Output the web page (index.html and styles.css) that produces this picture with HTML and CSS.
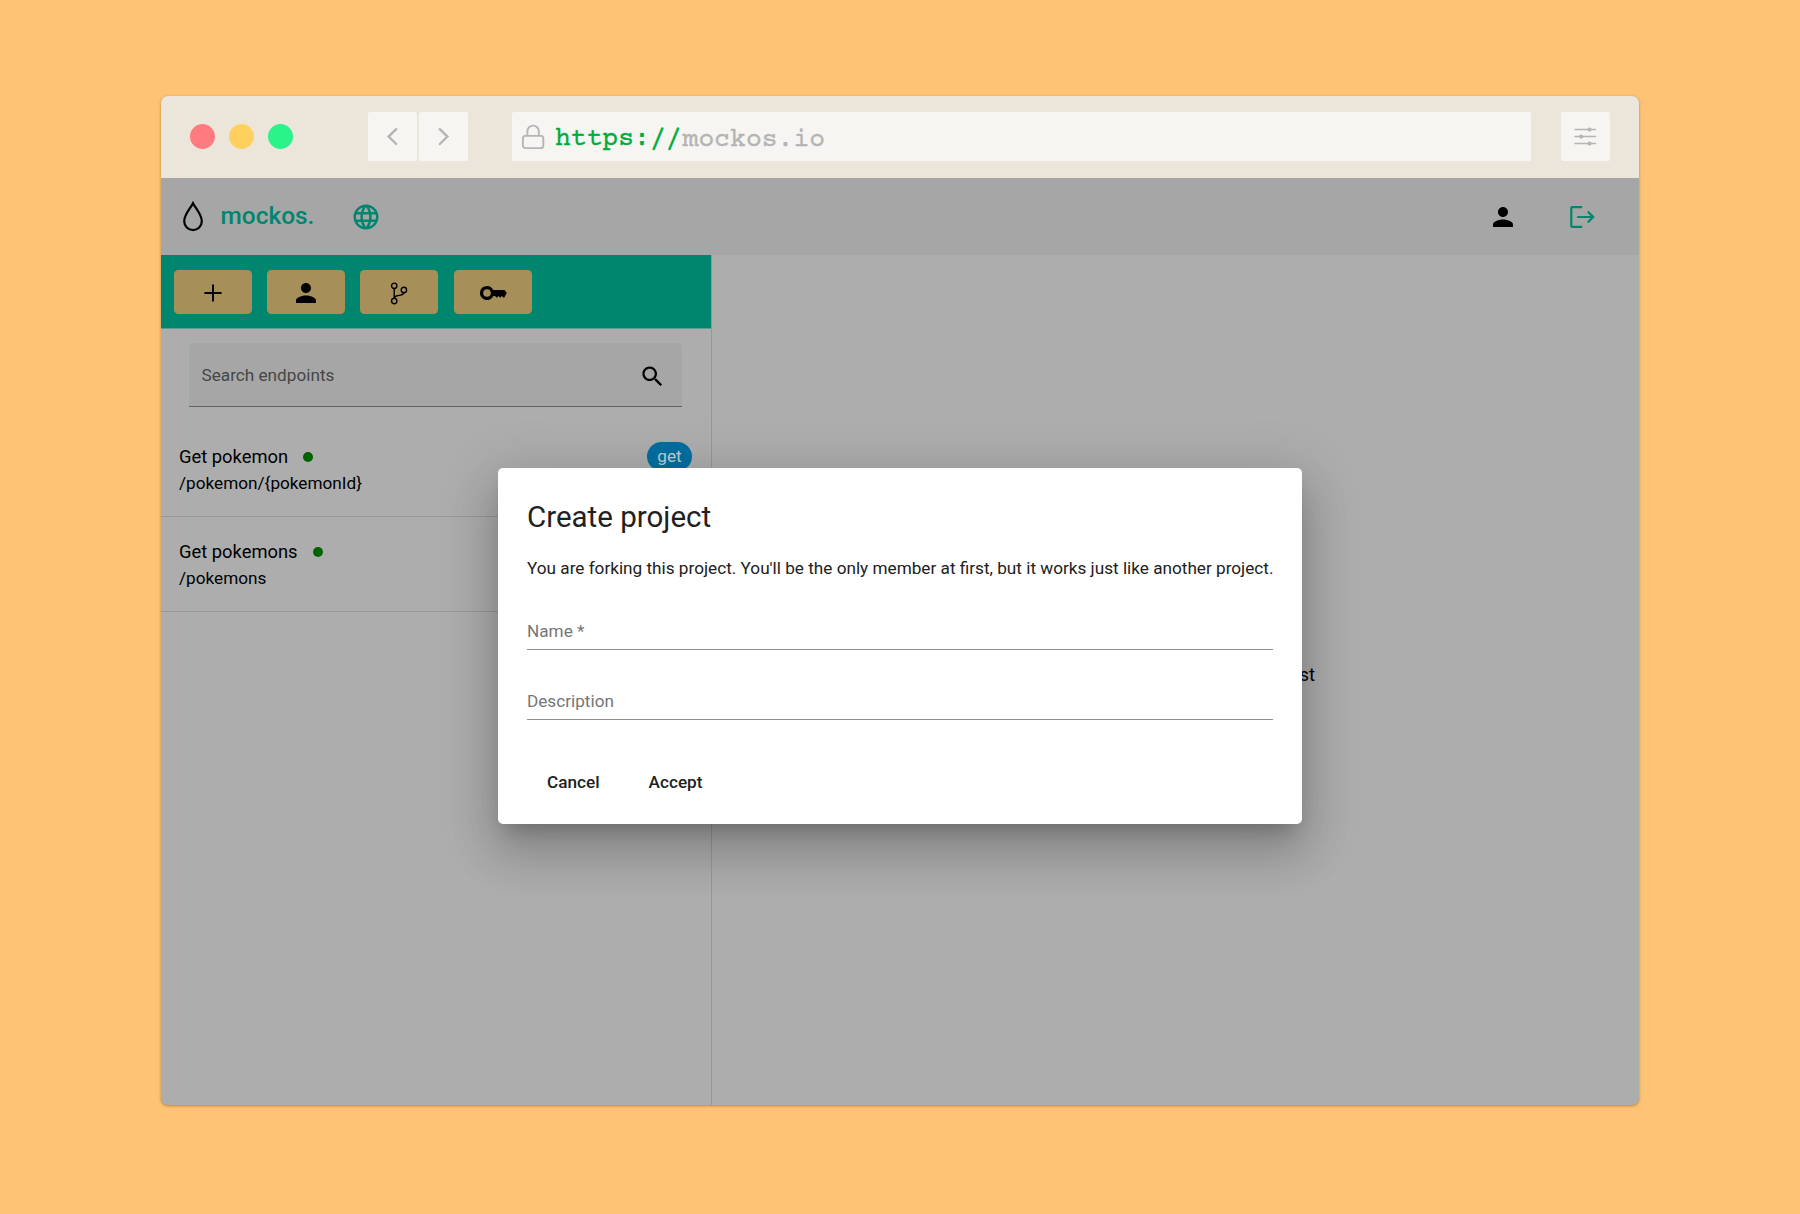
FILE: index.html
```html
<!DOCTYPE html>
<html lang="en">
<head>
<meta charset="utf-8">
<title>mockos.</title>
<link rel="stylesheet" href="styles.css">
</head>
<body>
<div class="window">
  <div class="chrome">
    <div class="lights"><i class="light red"></i><i class="light yellow"></i><i class="light green"></i></div>
    <div class="nav">
      <span class="tile"><svg width="49" height="49" viewBox="0 0 49 49"><path class="arrow" d="M28.2 17.2 20.6 24.6 28.2 32"/></svg></span>
      <span class="tile"><svg width="49" height="49" viewBox="0 0 49 49"><path class="arrow" d="M20.8 17.2 28.4 24.6 20.8 32"/></svg></span>
    </div>
    <div class="address">
      <svg class="lock" width="24" height="26" viewBox="0 0 24 26"><rect x="1.9" y="11.9" width="20.4" height="12.2" rx="2.4"/><path d="M6.4 11.5V7.3a5.7 5.7 0 0 1 11.4 0v4.2"/></svg>
      <span class="scheme">https://</span><span class="host">mockos.io</span>
    </div>
    <span class="tile settings"><svg width="49" height="49" viewBox="0 0 49 49"><g stroke="#b5b5b5" stroke-width="1.5" stroke-linecap="round"><path d="M14 17.6H34.5M14 24.6H34.5M14 31.6H34.5"/></g><g fill="#b5b5b5"><circle cx="28.5" cy="17.6" r="2.1"/><circle cx="20.2" cy="24.6" r="2.1"/><circle cx="28.5" cy="31.6" r="2.1"/></g></svg></span>
  </div>

  <div class="app">
    <header class="topbar">
      <svg class="drop" width="20" height="31" viewBox="0 0 20 31"><path d="M10 2.2C7.6 7.3 1.2 13.4 1.2 20.2a8.8 8.9 0 0 0 17.6 0C18.8 13.4 12.4 7.3 10 2.2z"/></svg>
      <span class="brand">mockos.</span>
      <svg class="globe" width="30" height="30" viewBox="0 0 24 24"><path d="M11.99 2C6.47 2 2 6.48 2 12s4.47 10 9.99 10C17.52 22 22 17.52 22 12S17.52 2 11.99 2zm6.93 6h-2.95c-.32-1.25-.78-2.45-1.38-3.56 1.84.63 3.37 1.91 4.33 3.56zM12 4.04c.83 1.2 1.48 2.53 1.91 3.96h-3.82c.43-1.43 1.08-2.76 1.91-3.96zM4.26 14C4.1 13.36 4 12.69 4 12s.1-1.36.26-2h3.38c-.08.66-.14 1.32-.14 2s.06 1.34.14 2H4.26zm.82 2h2.95c.32 1.25.78 2.45 1.38 3.56-1.84-.63-3.37-1.9-4.33-3.56zm2.95-8H5.08c.96-1.66 2.49-2.93 4.33-3.56C8.81 5.55 8.35 6.75 8.03 8zM12 19.96c-.83-1.2-1.48-2.53-1.91-3.96h3.82c-.43 1.43-1.08 2.76-1.91 3.96zM14.34 14H9.66c-.09-.66-.16-1.32-.16-2s.07-1.35.16-2h4.68c.09.65.16 1.32.16 2s-.07 1.34-.16 2zm.25 5.56c.6-1.11 1.06-2.31 1.38-3.56h2.95c-.96 1.65-2.49 2.93-4.33 3.56zM16.36 14c.08-.66.14-1.32.14-2s-.06-1.34-.14-2h3.38c.16.64.26 1.31.26 2s-.1 1.36-.26 2h-3.38z"/></svg>
      <svg class="account" width="30" height="30" viewBox="0 0 24 24"><path d="M12 12c2.21 0 4-1.79 4-4s-1.79-4-4-4-4 1.79-4 4 1.79 4 4 4zm0 2c-2.67 0-8 1.34-8 4v2h16v-2c0-2.66-5.33-4-8-4z"/></svg>
      <svg class="logout" width="26" height="24" viewBox="0 0 26 24"><path d="M13.2 2.1H3.3a1 1 0 0 0-1 1v17.8a1 1 0 0 0 1 1h9.9M8.2 12H24M18.8 6.6 24.1 12l-5.3 5.4"/></svg>
    </header>
    <div class="content">
      <aside class="sidebar">
        <div class="toolbar">
          <button class="tool"><svg width="18" height="18" viewBox="0 0 18 18"><path d="M9 .4v17.2M.4 9h17.2" stroke="#000" stroke-width="2"/></svg></button>
          <button class="tool"><svg width="30" height="30" viewBox="0 0 24 24"><path d="M12 12c2.21 0 4-1.79 4-4s-1.79-4-4-4-4 1.79-4 4 1.79 4 4 4zm0 2c-2.67 0-8 1.34-8 4v2h16v-2c0-2.66-5.33-4-8-4z"/></svg></button>
          <button class="tool"><svg width="18" height="23" viewBox="0 0 18 23" fill="none" stroke="#000" stroke-width="1.4"><circle cx="4.2" cy="3.8" r="2.7"/><circle cx="4.2" cy="19.1" r="2.7"/><circle cx="13.9" cy="8" r="2.7"/><path d="M4.2 6.5v9.9M4.2 16.4c.2-2 1.2-2.6 3.8-2.8 3.2-.2 5.4-.7 5.8-2.9"/></svg></button>
          <button class="tool"><svg width="28" height="16" viewBox="0 0 28 16"><path fill-rule="evenodd" d="M8 .9a7.1 7.1 0 1 0 6.4 10.2H16l1.7 1.6 1.8-1.6 1.7 1.6 1.6-1.7 2.2 1.9 2.8-5-2.2-2.8H14.3A7.1 7.1 0 0 0 8 .9zM8 4.2a3.8 3.8 0 1 1 0 7.6 3.8 3.8 0 0 1 0-7.6z"/></svg></button>
        </div>
        <div class="search"><span>Search endpoints</span><svg width="27" height="27" viewBox="0 0 24 24"><path d="M15.5 14h-.79l-.28-.27C15.41 12.59 16 11.11 16 9.5 16 5.91 13.09 3 9.5 3S3 5.91 3 9.5 5.91 16 9.5 16c1.61 0 3.09-.59 4.23-1.57l.27.28v.79l5 4.99L20.49 19l-4.99-5zm-6 0C7.01 14 5 11.99 5 9.5S7.01 5 9.5 5 14 7.01 14 9.5 11.99 14 9.5 14z"/></svg></div>
        <ul class="endpoints">
          <li class="endpoint"><div><div class="name">Get pokemon<i class="dot"></i></div><div class="path">/pokemon/{pokemonId}</div></div><span class="method">get</span></li>
          <li class="endpoint"><div><div class="name">Get pokemons<i class="dot"></i></div><div class="path">/pokemons</div></div><span class="method">get</span></li>
        </ul>
      </aside>
      <main class="main">Select an endpoint from the list</main>
    </div>
    <div class="overlay">
      <section class="dialog">
        <h1 class="title">Create project</h1>
        <p class="message">You are forking this project. You'll be the only member at first, but it works just like another project.</p>
        <div class="field">Name *</div>
        <div class="field">Description</div>
        <div class="actions"><button class="action">Cancel</button><button class="action">Accept</button></div>
      </section>
    </div>
  </div>
</div>
</body>
</html>
```
FILE: styles.css
```css
* { box-sizing: border-box; }
body {
  margin: 0;
  height: 1214px;
  padding: 96px 161px 0;
  background: #ffc375;
  font-family: Roboto, sans-serif;
  font-size: 17.18px;
  color: #000;
  overflow: hidden;
}
svg { display: block; flex: none; }
button { border: 0; padding: 0; font: inherit; background: none; }

.window {
  display: flex;
  flex-direction: column;
  width: 1478px;
  height: 1009px;
  border-radius: 7px;
  overflow: hidden;
  background: #adadad;
  box-shadow: 0 1px 3px rgba(90, 50, 0, .45);
}

/* browser frame */
.chrome {
  flex: none;
  display: flex;
  align-items: center;
  height: 82px;
  padding: 0 29px 1px;
  background: #ece5da;
}
.lights { display: flex; gap: 14.2px; width: 177.5px; }
.light { width: 25px; height: 25px; border-radius: 50%; }
.red { background: #ff7b7f; }
.yellow { background: #ffd05d; }
.green { background: #2af38a; }
.nav { display: flex; gap: 2.5px; }
.tile { width: 49px; height: 49px; border-radius: 2px; background: #f7f5f1; }
.arrow { fill: none; stroke: #b5b5b5; stroke-width: 2.4; stroke-linecap: round; }
.address {
  display: flex;
  align-items: center;
  width: 1019px;
  height: 49px;
  margin-left: 44px;
  padding-left: 9px;
  border-radius: 2px;
  background: #f7f5f1;
  font: 26.4px "Courier Prime", "Liberation Mono", monospace;
  white-space: pre;
}
.lock { margin-right: 10px; fill: none; stroke: #b5b5b5; stroke-width: 1.9; }
.scheme { padding-top: 4px; color: #00ac3a; -webkit-text-stroke: .35px #00ac3a; }
.host { padding: 6px 0 0 1px; color: #b4b4b4; -webkit-text-stroke: .35px #b4b4b4; }
.settings { margin-left: 29.5px; }

/* application */
.app { position: relative; flex: 1; display: flex; flex-direction: column; min-height: 0; }
.topbar {
  flex: none;
  display: flex;
  align-items: center;
  height: 77px;
  padding: 0 44.5px 0 22.3px;
  background: #a6a6a6;
}
.drop { fill: none; stroke: #000; stroke-width: 2.2; }
.brand { width: 130.5px; margin-left: 17.3px; padding-bottom: 3px; font-size: 24.4px; font-weight: 500; color: #00866f; }
.globe { fill: #00866f; }
.account { margin-left: auto; }
.logout { margin-left: 50.5px; fill: none; stroke: #00866f; stroke-width: 2.2; }
.content { flex: 1; display: flex; min-height: 0; }
.sidebar { width: 551px; border-right: 1px solid #979797; }
.toolbar {
  display: flex;
  gap: 15.2px;
  height: 74px;
  padding: 15px 13px 0;
  background: #00866f;
  border-bottom: 1px solid #5a9e92;
}
.tool {
  display: grid;
  place-items: center;
  width: 78px;
  height: 44px;
  padding: 2px 0 0;
  border-radius: 4.5px;
  background: #a68f59;
}
.search {
  display: flex;
  align-items: center;
  justify-content: space-between;
  width: 493px;
  height: 64px;
  margin: 14px 0 0 28px;
  padding: 1px 16px 0 12.5px;
  border-radius: 5px 5px 0 0;
  border-bottom: 1px solid #616161;
  background: #a6a6a6;
  color: #464646;
}
.search svg { margin-top: 2px; }
.endpoints { list-style: none; margin: 15px 0 0; padding: 0; }
.endpoint {
  display: flex;
  justify-content: space-between;
  height: 95px;
  padding: 20px 19px 0 18px;
  border-bottom: 1px solid #989898;
}
.name { display: flex; align-items: center; height: 29px; font-size: 18.35px; }
.dot { width: 10px; height: 10px; margin-left: 15px; border-radius: 50%; background: #006200; }
.path { line-height: 25px; }
.method {
  width: 45px;
  height: 29px;
  border-radius: 15px;
  background: #006fa1;
  color: #c4d0d6;
  line-height: 29px;
  text-align: center;
}
.main {
  flex: 1;
  padding: 409px 324px 0 0;
  font-size: 18.35px;
  line-height: 22px;
  text-align: right;
}

/* dialog */
.overlay {
  position: absolute;
  inset: 0;
  display: flex;
  align-items: center;
  justify-content: center;
  padding-top: 9px;
}
.dialog {
  width: 804px;
  height: 356px;
  padding: 29px;
  border-radius: 5px;
  background: #fff;
  color: #212121;
  box-shadow: 0 13px 18px -8px rgba(0, 0, 0, .2), 0 29px 46px 4px rgba(0, 0, 0, .14), 0 11px 56px 10px rgba(0, 0, 0, .12);
}
.title { margin: 0; font-size: 29.5px; font-weight: 400; line-height: 40px; }
.message { margin: 19px 0 0; line-height: 24px; white-space: nowrap; }
.field {
  height: 70px;
  padding-top: 39px;
  border-bottom: 1px solid #8e8e8e;
  line-height: 24px;
  color: #767676;
}
.actions { display: flex; gap: 49px; padding: 50px 0 0 20px; }
.action { font-weight: 500; line-height: 24px; color: #212121; }
```
